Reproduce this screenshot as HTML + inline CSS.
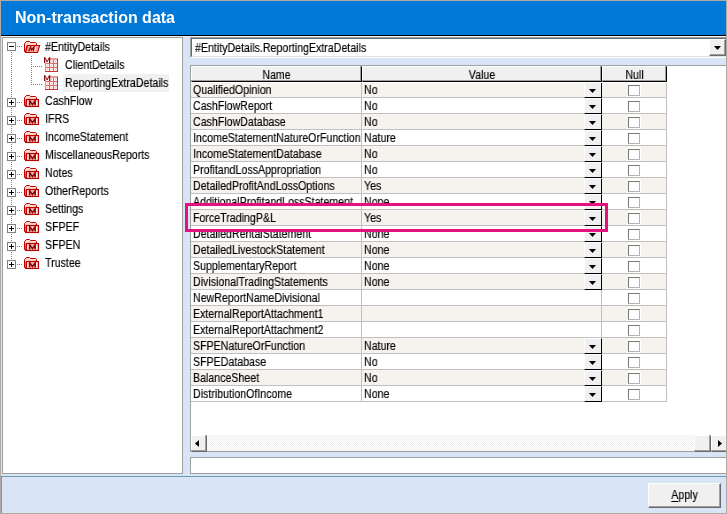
<!DOCTYPE html><html><head><meta charset="utf-8"><title>Non-transaction data</title><style>html,body{margin:0;padding:0;}
body{width:727px;height:514px;overflow:hidden;background:#d9e4f6;font-family:"Liberation Sans",sans-serif;font-size:12px;color:#000;}
#win{position:absolute;left:0;top:0;width:727px;height:514px;background:#d9e4f6;overflow:hidden;}
#win div,#win span,#win i{box-sizing:border-box;}
#frame{position:absolute;left:0;top:0;width:727px;height:514px;border:1px solid #b0aaa2;pointer-events:none;}
#title{position:absolute;left:1px;top:1px;width:725px;height:34px;background:#0078d7;}
#title span{will-change:transform;position:absolute;left:13.5px;top:7px;letter-spacing:0;font-size:16px;font-weight:bold;color:#fff;line-height:20px;white-space:nowrap;}
#titleline{position:absolute;left:1px;top:35px;width:725px;height:1px;background:#000;}
#titlelight{position:absolute;left:1px;top:36px;width:725px;height:1px;background:#e9f0fa;}
#tree{position:absolute;left:2px;top:37px;width:181px;height:437px;background:#fff;border:1px solid #a0a0a0;}
.tl{position:absolute;height:18px;line-height:18px;white-space:nowrap;padding:0 2px;margin-left:-1px;}
.tl.sel{background:#f0f0f0;padding:0 2px;width:106px;overflow:visible;}
.box{position:absolute;width:9px;height:9px;border:1px solid #808080;background:#fff;}
.box:before{content:"";position:absolute;left:1px;top:3px;width:5px;height:1px;background:#000;}
.box.plus:after{content:"";position:absolute;left:3px;top:1px;width:1px;height:5px;background:#000;}
.hd2{position:absolute;height:1px;background-image:linear-gradient(to right,#808080 50%,transparent 50%);background-size:2px 1px;}
.vd{position:absolute;width:1px;background-image:linear-gradient(to bottom,#808080 50%,transparent 50%);background-size:1px 2px;}
.ico{position:absolute;}
svg{display:block;}
#combo{position:absolute;left:190px;top:37px;width:538px;height:21px;background:#fff;border-top:1px solid #a0a0a0;border-left:1px solid #a0a0a0;border-bottom:1px solid #fff;border-right:1px solid #fff;}
#combo:before{content:"";position:absolute;left:0;top:0;right:0;bottom:0;border-top:1px solid #696969;border-left:1px solid #696969;border-right:1px solid #e3e3e3;border-bottom:1px solid #e3e3e3;}
#combo span{position:absolute;left:4px;top:3px;line-height:15px;white-space:nowrap;}
.cbtn{position:absolute;left:518px;top:1px;width:17px;height:17px;background:#f0f0f0;border-top:1px solid #fff;border-left:1px solid #fff;border-right:1px solid #696969;border-bottom:1px solid #696969;}
.cbtn:before{content:"";position:absolute;left:0;top:0;right:0;bottom:0;border-right:1px solid #a0a0a0;border-bottom:1px solid #a0a0a0;}
.arr{position:absolute;width:7px;height:4px;background:#000;clip-path:polygon(0 0,100% 0,50% 100%);}
.cbtn .arr{left:4px;top:6px;}
#grid{position:absolute;left:190px;top:65px;width:536px;height:387px;background:#fff;border-top:1px solid #a0a0a0;border-left:1px solid #a0a0a0;overflow:hidden;}
#grid>*{margin-left:-1px;margin-top:-1px;}
.hd{position:absolute;top:1px;height:16px;background:#f0f0f0;border-right:1px solid #000;border-bottom:1px solid #000;border-top:1px solid #fff;border-left:1px solid #fff;text-align:center;line-height:17px;}
.hd:before{content:"";position:absolute;left:-1px;top:-1px;right:0;bottom:0;border-right:1px solid #a0a0a0;border-bottom:1px solid #a0a0a0;}
.r{position:absolute;left:1px;width:476px;height:16px;border-bottom:1px solid #c0c0c0;background:#fff;}
.r.alt{background:#f6f3ee;}
.r span{position:absolute;top:0;height:16px;line-height:16px;white-space:nowrap;}
.c1{left:0;width:171px;border-right:1px solid #c0c0c0;padding-left:2px;}
.c2{left:171px;width:240px;padding-left:2px;border-right:1px solid #c0c0c0;}
.c3{left:411px;width:65px;border-right:1px solid #c0c0c0;}
.cb{position:absolute;left:26px;top:3px;width:12px;height:11px;border:1px solid #b4b4b4;border-top-color:#767676;border-left-color:#767676;background:#fff;box-shadow:1px 1px 0 0 #fff,1px -2px 0 0 #fff;}
.dd{left:393px;width:18px;height:16px !important;background:#f0f0f0;border-bottom:1px solid #000;border-right:1px solid #000;border-top:1px solid #fff;border-left:1px solid #fff;}
.dd .arr{left:4px;top:6px;}
#hs{position:absolute;left:1px;top:370px;width:535px;height:17px;border-bottom:1px solid #a0a0a0;background:repeating-conic-gradient(#fff 0 25%,#f0f0f0 0 50%) 0 0/2px 2px;}
.sb{position:absolute;top:0;width:16px;height:17px;background:#f0f0f0;border-right:1px solid #696969;border-bottom:1px solid #696969;border-top:1px solid #fff;border-left:1px solid #fff;}
.sb.l{left:0;}
.sb.rr{left:520px;width:17px;}
.thumb{position:absolute;left:503px;top:0;width:17px;height:17px;background:#f0f0f0;border-right:1px solid #696969;border-bottom:1px solid #696969;border-top:1px solid #fff;border-left:1px solid #fff;}
.la{position:absolute;left:3px;top:4px;width:4px;height:7px;background:#000;clip-path:polygon(100% 0,100% 100%,0 50%);}
.ra{position:absolute;left:6px;top:4px;width:4px;height:7px;background:#000;clip-path:polygon(0 0,0 100%,100% 50%);}
#hl{position:absolute;left:185px;top:203px;width:423px;height:29px;border:3px solid #e5127d;}
#field{position:absolute;left:190px;top:457px;width:536px;height:17px;background:#fff;border:1px solid #a0a0a0;border-right:0;}
#bottom{position:absolute;left:1px;top:476px;width:725px;height:37px;background:#d9e4f6;border-top:1px solid #6f9bb1;border-left:1px solid #6f9bb1;}
#apply{position:absolute;left:648px;top:483px;width:73px;height:25px;background:#f0f0f0;border-top:1px solid #fff;border-left:1px solid #fff;border-right:1px solid #696969;border-bottom:1px solid #696969;text-align:center;line-height:23px;}
#apply:before{content:"";position:absolute;left:0;top:0;right:0;bottom:0;border-right:1px solid #a0a0a0;border-bottom:1px solid #a0a0a0;}

b.t{font-weight:normal;}
.t{display:inline-block;-webkit-text-stroke:0.16px #000;will-change:transform;transform:scaleX(.885);transform-origin:0 50%;white-space:nowrap;}
.tc{display:block;-webkit-text-stroke:0.16px #000;will-change:transform;transform:scaleX(.885);transform-origin:50% 50%;white-space:nowrap;}

.sb:before,.thumb:before{content:"";position:absolute;left:-1px;top:-1px;right:0;bottom:0;border-right:1px solid #a0a0a0;border-bottom:1px solid #a0a0a0;}

#apply u{text-underline-offset:1.5px;}
#firstline{position:absolute;left:1px;top:17px;width:476px;height:1px;background:#fff;}
</style></head><body>
<div id="win">
<div id="title"><span>Non-transaction data</span></div><div id="titleline"></div><div id="titlelight"></div>
<div id="tree"></div>
<div class="vd" style="left:11px;top:52px;height:207px"></div>
<div class="vd" style="left:31px;top:56px;height:29px"></div>
<div class="hd2" style="left:17px;top:46px;width:5px"></div>
<div class="hd2" style="left:31px;top:66px;width:11px"></div>
<div class="hd2" style="left:31px;top:84px;width:11px"></div>
<div class="box minus" style="left:7px;top:42px"></div>
<div class="ico" style="left:24px;top:41px"><svg width="17" height="13" viewBox="0 0 17 13"><path d="M0.5 10.5 L0.5 2.5 L2.5 0.5 L5.5 0.5 L6.5 1.5 L11.5 1.5 L12.5 2.5 L12.5 4.5 L3 4.5 L1.5 11 Z" fill="#fbd9c8" stroke="#c00000" stroke-width="1"/><path d="M1.5 11.5 L3.5 4.5 L15.6 4.5 L13.6 11.5 Z" fill="#f4a9a0" stroke="#c00000" stroke-width="1.1"/><path d="M4.6 10.3 L6.6 6.2 L7.6 9 L10 6 L9.6 10.3" fill="none" stroke="#8c0a0a" stroke-width="1.3"/><path d="M11.6 6 L10.8 10.5" stroke="#ffe9e0" stroke-width="0.9"/></svg></div>
<div class="tl" style="left:44px;top:38px"><span class="t">#EntityDetails</span></div>
<div class="ico" style="left:44px;top:57px"><svg width="16" height="16" viewBox="0 0 16 16"><rect x="1" y="1" width="13" height="14" fill="#de6a6a"/><rect x="1" y="1" width="13" height="2" fill="#e99c9c"/><rect x="1" y="1" width="1" height="14" fill="#e68c8c"/><rect x="13" y="2" width="1" height="13" fill="#c83434"/><rect x="1" y="14" width="13" height="1" fill="#c83434"/><rect x="2" y="3" width="3" height="3" fill="#fdeaea"/><rect x="3" y="4" width="1" height="1" fill="#f4c4c4"/><rect x="2" y="7" width="3" height="3" fill="#fdeaea"/><rect x="3" y="8" width="1" height="1" fill="#f4c4c4"/><rect x="2" y="11" width="3" height="3" fill="#fdeaea"/><rect x="3" y="12" width="1" height="1" fill="#f4c4c4"/><rect x="6" y="3" width="3" height="3" fill="#fdeaea"/><rect x="7" y="4" width="1" height="1" fill="#f4c4c4"/><rect x="6" y="7" width="3" height="3" fill="#fdeaea"/><rect x="7" y="8" width="1" height="1" fill="#f4c4c4"/><rect x="6" y="11" width="3" height="3" fill="#fdeaea"/><rect x="7" y="12" width="1" height="1" fill="#f4c4c4"/><rect x="10" y="3" width="3" height="3" fill="#fdeaea"/><rect x="11" y="4" width="1" height="1" fill="#f4c4c4"/><rect x="10" y="7" width="3" height="3" fill="#fdeaea"/><rect x="11" y="8" width="1" height="1" fill="#f4c4c4"/><rect x="10" y="11" width="3" height="3" fill="#fdeaea"/><rect x="11" y="12" width="1" height="1" fill="#f4c4c4"/><rect x="0" y="0" width="6" height="5.6" fill="#fff" opacity="0.9"/><path d="M0.6 6 L0.6 0.3 M5.6 6 L5.6 0.3" fill="none" stroke="#8a0a16" stroke-width="1.2"/><path d="M0.9 0.5 L3.1 5 L5.3 0.5" fill="none" stroke="#8a0a16" stroke-width="1"/></svg></div>
<div class="tl" style="left:64px;top:56px"><span class="t">ClientDetails</span></div>
<div class="ico" style="left:44px;top:75px"><svg width="16" height="16" viewBox="0 0 16 16"><rect x="1" y="1" width="13" height="14" fill="#de6a6a"/><rect x="1" y="1" width="13" height="2" fill="#e99c9c"/><rect x="1" y="1" width="1" height="14" fill="#e68c8c"/><rect x="13" y="2" width="1" height="13" fill="#c83434"/><rect x="1" y="14" width="13" height="1" fill="#c83434"/><rect x="2" y="3" width="3" height="3" fill="#fdeaea"/><rect x="3" y="4" width="1" height="1" fill="#f4c4c4"/><rect x="2" y="7" width="3" height="3" fill="#fdeaea"/><rect x="3" y="8" width="1" height="1" fill="#f4c4c4"/><rect x="2" y="11" width="3" height="3" fill="#fdeaea"/><rect x="3" y="12" width="1" height="1" fill="#f4c4c4"/><rect x="6" y="3" width="3" height="3" fill="#fdeaea"/><rect x="7" y="4" width="1" height="1" fill="#f4c4c4"/><rect x="6" y="7" width="3" height="3" fill="#fdeaea"/><rect x="7" y="8" width="1" height="1" fill="#f4c4c4"/><rect x="6" y="11" width="3" height="3" fill="#fdeaea"/><rect x="7" y="12" width="1" height="1" fill="#f4c4c4"/><rect x="10" y="3" width="3" height="3" fill="#fdeaea"/><rect x="11" y="4" width="1" height="1" fill="#f4c4c4"/><rect x="10" y="7" width="3" height="3" fill="#fdeaea"/><rect x="11" y="8" width="1" height="1" fill="#f4c4c4"/><rect x="10" y="11" width="3" height="3" fill="#fdeaea"/><rect x="11" y="12" width="1" height="1" fill="#f4c4c4"/><rect x="0" y="0" width="6" height="5.6" fill="#fff" opacity="0.9"/><path d="M0.6 6 L0.6 0.3 M5.6 6 L5.6 0.3" fill="none" stroke="#8a0a16" stroke-width="1.2"/><path d="M0.9 0.5 L3.1 5 L5.3 0.5" fill="none" stroke="#8a0a16" stroke-width="1"/></svg></div>
<div class="tl sel" style="left:64px;top:74px"><span class="t">ReportingExtraDetails</span></div>
<div class="hd2" style="left:17px;top:102px;width:5px"></div>
<div class="box plus" style="left:7px;top:98px"></div>
<div class="ico" style="left:24px;top:95px"><svg width="17" height="13" viewBox="0 0 17 13"><path d="M0.5 10.5 L0.5 2.5 L2.5 0.5 L5.5 0.5 L6.5 1.5 L11.5 1.5 L12.5 2.5 L12.5 4.5 L2 4.5 L2 11 Z" fill="#fbd9c8" stroke="#c00000" stroke-width="1"/><rect x="2.5" y="4.5" width="12" height="7" fill="#f6b4aa" stroke="#c00000" stroke-width="1.1"/><path d="M1 11.5 L14 11.5" stroke="#c00000" stroke-width="1"/><path d="M3.8 5.5 L3.8 10.5 M12.6 5.5 L12.6 10.5" stroke="#fff" stroke-width="0.9"/><path d="M5.7 10.6 L5.7 5.6 L8.5 9.6 L11.2 5.6 L11.2 10.6" fill="none" stroke="#8c0a0a" stroke-width="1.5"/></svg></div>
<div class="tl" style="left:44px;top:92px"><span class="t">CashFlow</span></div>
<div class="hd2" style="left:17px;top:120px;width:5px"></div>
<div class="box plus" style="left:7px;top:116px"></div>
<div class="ico" style="left:24px;top:113px"><svg width="17" height="13" viewBox="0 0 17 13"><path d="M0.5 10.5 L0.5 2.5 L2.5 0.5 L5.5 0.5 L6.5 1.5 L11.5 1.5 L12.5 2.5 L12.5 4.5 L2 4.5 L2 11 Z" fill="#fbd9c8" stroke="#c00000" stroke-width="1"/><rect x="2.5" y="4.5" width="12" height="7" fill="#f6b4aa" stroke="#c00000" stroke-width="1.1"/><path d="M1 11.5 L14 11.5" stroke="#c00000" stroke-width="1"/><path d="M3.8 5.5 L3.8 10.5 M12.6 5.5 L12.6 10.5" stroke="#fff" stroke-width="0.9"/><path d="M5.7 10.6 L5.7 5.6 L8.5 9.6 L11.2 5.6 L11.2 10.6" fill="none" stroke="#8c0a0a" stroke-width="1.5"/></svg></div>
<div class="tl" style="left:44px;top:110px"><span class="t">IFRS</span></div>
<div class="hd2" style="left:17px;top:138px;width:5px"></div>
<div class="box plus" style="left:7px;top:134px"></div>
<div class="ico" style="left:24px;top:131px"><svg width="17" height="13" viewBox="0 0 17 13"><path d="M0.5 10.5 L0.5 2.5 L2.5 0.5 L5.5 0.5 L6.5 1.5 L11.5 1.5 L12.5 2.5 L12.5 4.5 L2 4.5 L2 11 Z" fill="#fbd9c8" stroke="#c00000" stroke-width="1"/><rect x="2.5" y="4.5" width="12" height="7" fill="#f6b4aa" stroke="#c00000" stroke-width="1.1"/><path d="M1 11.5 L14 11.5" stroke="#c00000" stroke-width="1"/><path d="M3.8 5.5 L3.8 10.5 M12.6 5.5 L12.6 10.5" stroke="#fff" stroke-width="0.9"/><path d="M5.7 10.6 L5.7 5.6 L8.5 9.6 L11.2 5.6 L11.2 10.6" fill="none" stroke="#8c0a0a" stroke-width="1.5"/></svg></div>
<div class="tl" style="left:44px;top:128px"><span class="t">IncomeStatement</span></div>
<div class="hd2" style="left:17px;top:156px;width:5px"></div>
<div class="box plus" style="left:7px;top:152px"></div>
<div class="ico" style="left:24px;top:149px"><svg width="17" height="13" viewBox="0 0 17 13"><path d="M0.5 10.5 L0.5 2.5 L2.5 0.5 L5.5 0.5 L6.5 1.5 L11.5 1.5 L12.5 2.5 L12.5 4.5 L2 4.5 L2 11 Z" fill="#fbd9c8" stroke="#c00000" stroke-width="1"/><rect x="2.5" y="4.5" width="12" height="7" fill="#f6b4aa" stroke="#c00000" stroke-width="1.1"/><path d="M1 11.5 L14 11.5" stroke="#c00000" stroke-width="1"/><path d="M3.8 5.5 L3.8 10.5 M12.6 5.5 L12.6 10.5" stroke="#fff" stroke-width="0.9"/><path d="M5.7 10.6 L5.7 5.6 L8.5 9.6 L11.2 5.6 L11.2 10.6" fill="none" stroke="#8c0a0a" stroke-width="1.5"/></svg></div>
<div class="tl" style="left:44px;top:146px"><span class="t">MiscellaneousReports</span></div>
<div class="hd2" style="left:17px;top:174px;width:5px"></div>
<div class="box plus" style="left:7px;top:170px"></div>
<div class="ico" style="left:24px;top:167px"><svg width="17" height="13" viewBox="0 0 17 13"><path d="M0.5 10.5 L0.5 2.5 L2.5 0.5 L5.5 0.5 L6.5 1.5 L11.5 1.5 L12.5 2.5 L12.5 4.5 L2 4.5 L2 11 Z" fill="#fbd9c8" stroke="#c00000" stroke-width="1"/><rect x="2.5" y="4.5" width="12" height="7" fill="#f6b4aa" stroke="#c00000" stroke-width="1.1"/><path d="M1 11.5 L14 11.5" stroke="#c00000" stroke-width="1"/><path d="M3.8 5.5 L3.8 10.5 M12.6 5.5 L12.6 10.5" stroke="#fff" stroke-width="0.9"/><path d="M5.7 10.6 L5.7 5.6 L8.5 9.6 L11.2 5.6 L11.2 10.6" fill="none" stroke="#8c0a0a" stroke-width="1.5"/></svg></div>
<div class="tl" style="left:44px;top:164px"><span class="t">Notes</span></div>
<div class="hd2" style="left:17px;top:192px;width:5px"></div>
<div class="box plus" style="left:7px;top:188px"></div>
<div class="ico" style="left:24px;top:185px"><svg width="17" height="13" viewBox="0 0 17 13"><path d="M0.5 10.5 L0.5 2.5 L2.5 0.5 L5.5 0.5 L6.5 1.5 L11.5 1.5 L12.5 2.5 L12.5 4.5 L2 4.5 L2 11 Z" fill="#fbd9c8" stroke="#c00000" stroke-width="1"/><rect x="2.5" y="4.5" width="12" height="7" fill="#f6b4aa" stroke="#c00000" stroke-width="1.1"/><path d="M1 11.5 L14 11.5" stroke="#c00000" stroke-width="1"/><path d="M3.8 5.5 L3.8 10.5 M12.6 5.5 L12.6 10.5" stroke="#fff" stroke-width="0.9"/><path d="M5.7 10.6 L5.7 5.6 L8.5 9.6 L11.2 5.6 L11.2 10.6" fill="none" stroke="#8c0a0a" stroke-width="1.5"/></svg></div>
<div class="tl" style="left:44px;top:182px"><span class="t">OtherReports</span></div>
<div class="hd2" style="left:17px;top:210px;width:5px"></div>
<div class="box plus" style="left:7px;top:206px"></div>
<div class="ico" style="left:24px;top:203px"><svg width="17" height="13" viewBox="0 0 17 13"><path d="M0.5 10.5 L0.5 2.5 L2.5 0.5 L5.5 0.5 L6.5 1.5 L11.5 1.5 L12.5 2.5 L12.5 4.5 L2 4.5 L2 11 Z" fill="#fbd9c8" stroke="#c00000" stroke-width="1"/><rect x="2.5" y="4.5" width="12" height="7" fill="#f6b4aa" stroke="#c00000" stroke-width="1.1"/><path d="M1 11.5 L14 11.5" stroke="#c00000" stroke-width="1"/><path d="M3.8 5.5 L3.8 10.5 M12.6 5.5 L12.6 10.5" stroke="#fff" stroke-width="0.9"/><path d="M5.7 10.6 L5.7 5.6 L8.5 9.6 L11.2 5.6 L11.2 10.6" fill="none" stroke="#8c0a0a" stroke-width="1.5"/></svg></div>
<div class="tl" style="left:44px;top:200px"><span class="t">Settings</span></div>
<div class="hd2" style="left:17px;top:228px;width:5px"></div>
<div class="box plus" style="left:7px;top:224px"></div>
<div class="ico" style="left:24px;top:221px"><svg width="17" height="13" viewBox="0 0 17 13"><path d="M0.5 10.5 L0.5 2.5 L2.5 0.5 L5.5 0.5 L6.5 1.5 L11.5 1.5 L12.5 2.5 L12.5 4.5 L2 4.5 L2 11 Z" fill="#fbd9c8" stroke="#c00000" stroke-width="1"/><rect x="2.5" y="4.5" width="12" height="7" fill="#f6b4aa" stroke="#c00000" stroke-width="1.1"/><path d="M1 11.5 L14 11.5" stroke="#c00000" stroke-width="1"/><path d="M3.8 5.5 L3.8 10.5 M12.6 5.5 L12.6 10.5" stroke="#fff" stroke-width="0.9"/><path d="M5.7 10.6 L5.7 5.6 L8.5 9.6 L11.2 5.6 L11.2 10.6" fill="none" stroke="#8c0a0a" stroke-width="1.5"/></svg></div>
<div class="tl" style="left:44px;top:218px"><span class="t">SFPEF</span></div>
<div class="hd2" style="left:17px;top:246px;width:5px"></div>
<div class="box plus" style="left:7px;top:242px"></div>
<div class="ico" style="left:24px;top:239px"><svg width="17" height="13" viewBox="0 0 17 13"><path d="M0.5 10.5 L0.5 2.5 L2.5 0.5 L5.5 0.5 L6.5 1.5 L11.5 1.5 L12.5 2.5 L12.5 4.5 L2 4.5 L2 11 Z" fill="#fbd9c8" stroke="#c00000" stroke-width="1"/><rect x="2.5" y="4.5" width="12" height="7" fill="#f6b4aa" stroke="#c00000" stroke-width="1.1"/><path d="M1 11.5 L14 11.5" stroke="#c00000" stroke-width="1"/><path d="M3.8 5.5 L3.8 10.5 M12.6 5.5 L12.6 10.5" stroke="#fff" stroke-width="0.9"/><path d="M5.7 10.6 L5.7 5.6 L8.5 9.6 L11.2 5.6 L11.2 10.6" fill="none" stroke="#8c0a0a" stroke-width="1.5"/></svg></div>
<div class="tl" style="left:44px;top:236px"><span class="t">SFPEN</span></div>
<div class="hd2" style="left:17px;top:264px;width:5px"></div>
<div class="box plus" style="left:7px;top:260px"></div>
<div class="ico" style="left:24px;top:257px"><svg width="17" height="13" viewBox="0 0 17 13"><path d="M0.5 10.5 L0.5 2.5 L2.5 0.5 L5.5 0.5 L6.5 1.5 L11.5 1.5 L12.5 2.5 L12.5 4.5 L2 4.5 L2 11 Z" fill="#fbd9c8" stroke="#c00000" stroke-width="1"/><rect x="2.5" y="4.5" width="12" height="7" fill="#f6b4aa" stroke="#c00000" stroke-width="1.1"/><path d="M1 11.5 L14 11.5" stroke="#c00000" stroke-width="1"/><path d="M3.8 5.5 L3.8 10.5 M12.6 5.5 L12.6 10.5" stroke="#fff" stroke-width="0.9"/><path d="M5.7 10.6 L5.7 5.6 L8.5 9.6 L11.2 5.6 L11.2 10.6" fill="none" stroke="#8c0a0a" stroke-width="1.5"/></svg></div>
<div class="tl" style="left:44px;top:254px"><span class="t">Trustee</span></div>
<div id="combo"><span class="t">#EntityDetails.ReportingExtraDetails</span><div class="cbtn"><i class="arr"></i></div></div>
<div id="grid">
<div class="hd" style="left:1px;width:171px"><span class="tc">Name</span></div><div class="hd" style="left:172px;width:240px"><span class="tc">Value</span></div><div class="hd" style="left:412px;width:65px"><span class="tc">Null</span></div>
<div class="r alt" style="top:17px"><span class="c1"><b class="t">QualifiedOpinion</b></span><span class="c2"><b class="t">No</b></span><span class="dd"><i class="arr"></i></span><span class="c3"><i class="cb"></i></span></div>
<div class="r" style="top:33px"><span class="c1"><b class="t">CashFlowReport</b></span><span class="c2"><b class="t">No</b></span><span class="dd"><i class="arr"></i></span><span class="c3"><i class="cb"></i></span></div>
<div class="r alt" style="top:49px"><span class="c1"><b class="t">CashFlowDatabase</b></span><span class="c2"><b class="t">No</b></span><span class="dd"><i class="arr"></i></span><span class="c3"><i class="cb"></i></span></div>
<div class="r" style="top:65px"><span class="c1"><b class="t">IncomeStatementNatureOrFunction</b></span><span class="c2"><b class="t">Nature</b></span><span class="dd"><i class="arr"></i></span><span class="c3"><i class="cb"></i></span></div>
<div class="r alt" style="top:81px"><span class="c1"><b class="t">IncomeStatementDatabase</b></span><span class="c2"><b class="t">No</b></span><span class="dd"><i class="arr"></i></span><span class="c3"><i class="cb"></i></span></div>
<div class="r" style="top:97px"><span class="c1"><b class="t">ProfitandLossAppropriation</b></span><span class="c2"><b class="t">No</b></span><span class="dd"><i class="arr"></i></span><span class="c3"><i class="cb"></i></span></div>
<div class="r alt" style="top:113px"><span class="c1"><b class="t">DetailedProfitAndLossOptions</b></span><span class="c2"><b class="t">Yes</b></span><span class="dd"><i class="arr"></i></span><span class="c3"><i class="cb"></i></span></div>
<div class="r" style="top:129px"><span class="c1"><b class="t">AdditionalProfitandLossStatement</b></span><span class="c2"><b class="t">None</b></span><span class="dd"><i class="arr"></i></span><span class="c3"><i class="cb"></i></span></div>
<div class="r alt" style="top:145px"><span class="c1"><b class="t">ForceTradingP&amp;L</b></span><span class="c2"><b class="t">Yes</b></span><span class="dd"><i class="arr"></i></span><span class="c3"><i class="cb"></i></span></div>
<div class="r" style="top:161px"><span class="c1"><b class="t">DetailedRentalStatement</b></span><span class="c2"><b class="t">None</b></span><span class="dd"><i class="arr"></i></span><span class="c3"><i class="cb"></i></span></div>
<div class="r alt" style="top:177px"><span class="c1"><b class="t">DetailedLivestockStatement</b></span><span class="c2"><b class="t">None</b></span><span class="dd"><i class="arr"></i></span><span class="c3"><i class="cb"></i></span></div>
<div class="r" style="top:193px"><span class="c1"><b class="t">SupplementaryReport</b></span><span class="c2"><b class="t">None</b></span><span class="dd"><i class="arr"></i></span><span class="c3"><i class="cb"></i></span></div>
<div class="r alt" style="top:209px"><span class="c1"><b class="t">DivisionalTradingStatements</b></span><span class="c2"><b class="t">None</b></span><span class="dd"><i class="arr"></i></span><span class="c3"><i class="cb"></i></span></div>
<div class="r" style="top:225px"><span class="c1"><b class="t">NewReportNameDivisional</b></span><span class="c2"><b class="t"></b></span><span class="c3"><i class="cb"></i></span></div>
<div class="r alt" style="top:241px"><span class="c1"><b class="t">ExternalReportAttachment1</b></span><span class="c2"><b class="t"></b></span><span class="c3"><i class="cb"></i></span></div>
<div class="r" style="top:257px"><span class="c1"><b class="t">ExternalReportAttachment2</b></span><span class="c2"><b class="t"></b></span><span class="c3"><i class="cb"></i></span></div>
<div class="r alt" style="top:273px"><span class="c1"><b class="t">SFPENatureOrFunction</b></span><span class="c2"><b class="t">Nature</b></span><span class="dd"><i class="arr"></i></span><span class="c3"><i class="cb"></i></span></div>
<div class="r" style="top:289px"><span class="c1"><b class="t">SFPEDatabase</b></span><span class="c2"><b class="t">No</b></span><span class="dd"><i class="arr"></i></span><span class="c3"><i class="cb"></i></span></div>
<div class="r alt" style="top:305px"><span class="c1"><b class="t">BalanceSheet</b></span><span class="c2"><b class="t">No</b></span><span class="dd"><i class="arr"></i></span><span class="c3"><i class="cb"></i></span></div>
<div class="r" style="top:321px"><span class="c1"><b class="t">DistributionOfIncome</b></span><span class="c2"><b class="t">None</b></span><span class="dd"><i class="arr"></i></span><span class="c3"><i class="cb"></i></span></div>
<div id="firstline"></div>
<div id="hs"><div class="sb l"><i class="la"></i></div><div class="thumb"></div><div class="sb rr"><i class="ra"></i></div></div>
</div>
<div id="hl"></div>
<div id="field"></div>
<div id="bottom"></div>
<div id="apply"><span class="tc"><u>A</u>pply</span></div>
<div id="frame"></div>
</div></body></html>
